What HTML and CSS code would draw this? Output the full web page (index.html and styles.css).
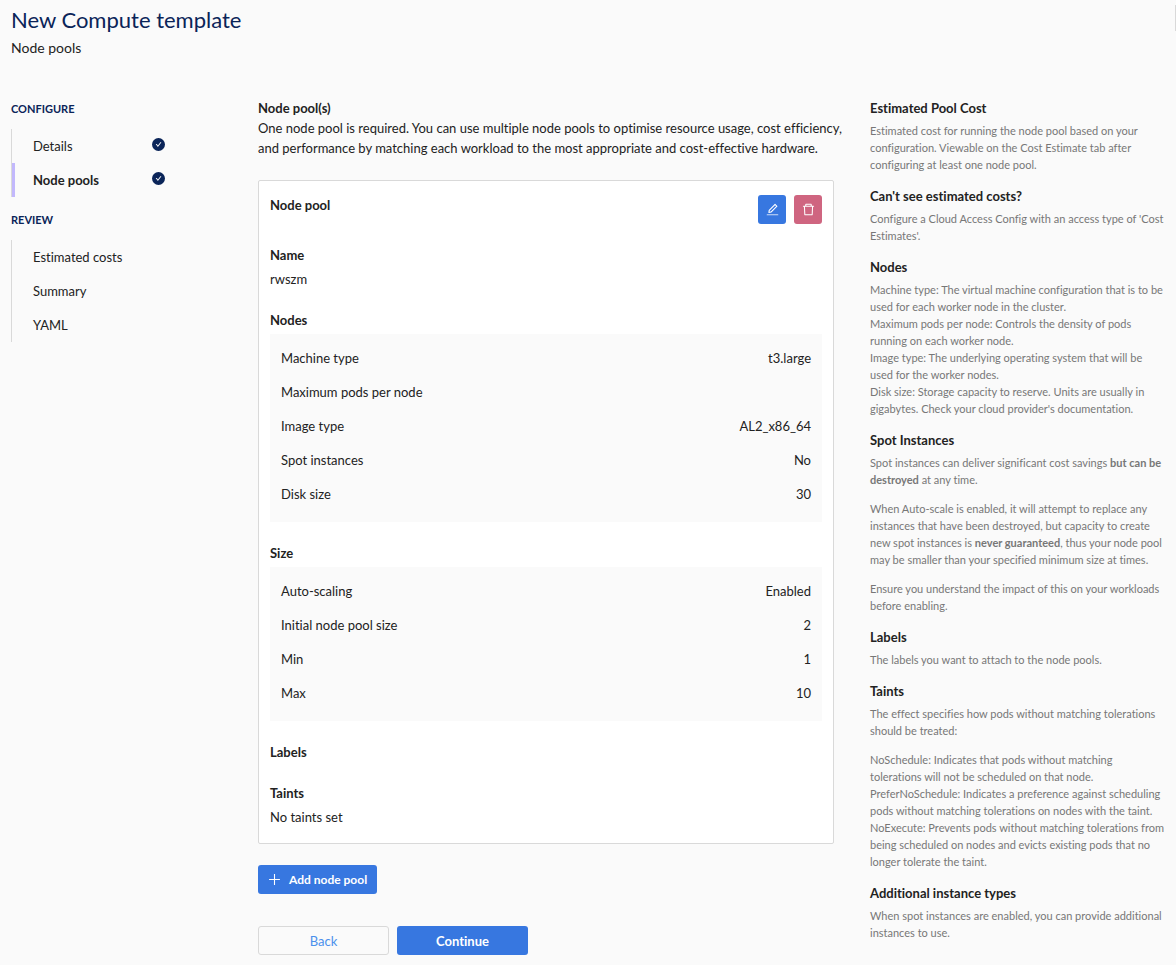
FILE: index.html
```html
<!DOCTYPE html>
<html lang="en">
<head>
<meta charset="utf-8">
<meta name="viewport" content="width=device-width, initial-scale=1">
<title>New Compute template</title>
<link rel="stylesheet" href="styles.css">
</head>
<body>
<header class="page-header">
  <div>
    <h1 class="page-title">New Compute template</h1>
    <p class="page-subtitle">Node pools</p>
  </div>
  <span class="header-edge"></span>
</header>
<div class="layout">
  <nav class="steps" aria-label="Steps">
    <h2 class="steps-heading">CONFIGURE</h2>
    <ul class="steps-list">
      <li><a class="step" href="#details">Details
        <svg class="step-check" viewBox="64 64 896 896" aria-hidden="true"><circle cx="512" cy="512" r="448" fill="#0a2458"/><path fill="#fff" d="M699 353h-46.9c-10.2 0-19.9 4.9-25.9 13.3L469 584.3l-71.2-98.8c-6-8.3-15.6-13.3-25.9-13.3H325c-6.5 0-10.3 7.4-6.5 12.7l124.6 172.8a31.8 31.8 0 0051.7 0l210.6-292c3.9-5.3.1-12.7-6.4-12.7z"/></svg></a></li>
      <li><a class="step step-active" href="#node-pools" aria-current="step">Node pools
        <svg class="step-check" viewBox="64 64 896 896" aria-hidden="true"><circle cx="512" cy="512" r="448" fill="#0a2458"/><path fill="#fff" d="M699 353h-46.9c-10.2 0-19.9 4.9-25.9 13.3L469 584.3l-71.2-98.8c-6-8.3-15.6-13.3-25.9-13.3H325c-6.5 0-10.3 7.4-6.5 12.7l124.6 172.8a31.8 31.8 0 0051.7 0l210.6-292c3.9-5.3.1-12.7-6.4-12.7z"/></svg></a></li>
    </ul>
    <h2 class="steps-heading">REVIEW</h2>
    <ul class="steps-list">
      <li><a class="step" href="#costs">Estimated costs</a></li>
      <li><a class="step" href="#summary">Summary</a></li>
      <li><a class="step" href="#yaml">YAML</a></li>
    </ul>
  </nav>

  <main class="content">
    <h2 class="label">Node pool(s)</h2>
    <p class="intro">One node pool is required. You can use multiple node pools to optimise resource usage, cost efficiency, and performance by matching each workload to the most appropriate and cost-effective hardware.</p>

    <section class="card">
      <div class="card-header">
        <h3 class="label">Node pool</h3>
        <div class="card-actions">
          <button class="btn btn-icon btn-primary" type="button" aria-label="Edit node pool"><svg class="icon" viewBox="64 64 896 896" aria-hidden="true"><path d="M257.7 752c2 0 4-.2 6-.5L431.9 722c2-.4 3.9-1.3 5.3-2.8l423.9-423.9a9.96 9.96 0 000-14.1L694.9 114.9c-1.900-1.900-4.400-2.900-7.100-2.900s-5.200 1-7.100 2.900L256.800 538.800c-1.500 1.500-2.400 3.300-2.800 5.300l-29.500 168.200a33.500 33.500 0 009.400 29.800c6.600 6.400 14.900 9.900 23.800 9.900zm67.400-174.400L687.800 215l73.300 73.300-362.700 362.600-88.900 15.700 15.600-89z"/><path opacity=".75" d="M880 836H144c-17.700 0-32 14.300-32 32v36c0 4.400 3.600 8 8 8h784c4.400 0 8-3.600 8-8v-36c0-17.700-14.300-32-32-32z"/></svg></button>
          <button class="btn btn-icon btn-danger" type="button" aria-label="Delete node pool"><svg class="icon" viewBox="64 64 896 896" aria-hidden="true"><path d="M360 184h-8c4.400 0 8-3.600 8-8v8h304v-8c0 4.400 3.600 8 8 8h-8v72h72v-80c0-35.300-28.700-64-64-64H352c-35.300 0-64 28.700-64 64v80h72v-72zm504 72H160c-17.700 0-32 14.300-32 32v32c0 4.400 3.600 8 8 8h60.400l24.700 523c1.600 34.100 29.800 61 63.900 61h454c34.200 0 62.300-26.800 63.900-61l24.700-523H888c4.400 0 8-3.600 8-8v-32c0-17.700-14.300-32-32-32zM731.300 840H292.700l-24.200-512h487l-24.200 512z"/></svg></button>
        </div>
      </div>
      <section class="group">
        <h4 class="label">Name</h4>
        <p class="value">rwszm</p>
      </section>
      <section class="group">
        <h4 class="label">Nodes</h4>
        <dl class="facts">
          <div class="fact"><dt>Machine type</dt><dd>t3.large</dd></div>
          <div class="fact"><dt>Maximum pods per node</dt><dd></dd></div>
          <div class="fact"><dt>Image type</dt><dd>AL2_x86_64</dd></div>
          <div class="fact"><dt>Spot instances</dt><dd>No</dd></div>
          <div class="fact"><dt>Disk size</dt><dd>30</dd></div>
        </dl>
      </section>
      <section class="group">
        <h4 class="label">Size</h4>
        <dl class="facts">
          <div class="fact"><dt>Auto-scaling</dt><dd>Enabled</dd></div>
          <div class="fact"><dt>Initial node pool size</dt><dd>2</dd></div>
          <div class="fact"><dt>Min</dt><dd>1</dd></div>
          <div class="fact"><dt>Max</dt><dd>10</dd></div>
        </dl>
      </section>
      <section class="group">
        <h4 class="label">Labels</h4>
      </section>
      <section class="group">
        <h4 class="label">Taints</h4>
        <p class="value">No taints set</p>
      </section>
    </section>

    <button class="btn btn-primary btn-add" type="button"><svg class="icon" viewBox="0 0 12 12" aria-hidden="true"><path d="M5.500 1h1v4.500H11v1H6.500V11h-1V6.500H1v-1h4.500z"/></svg>Add node pool</button>
    <div class="form-actions">
      <button class="btn btn-wide btn-default" type="button">Back</button>
      <button class="btn btn-wide btn-primary" type="button">Continue</button>
    </div>
  </main>

  <aside class="help">
    <h3>Estimated Pool Cost</h3>
    <p>Estimated cost for running the node pool based on your configuration. Viewable on the Cost Estimate tab after configuring at least one node pool.</p>
    <h3>Can't see estimated costs?</h3>
    <p>Configure a Cloud Access Config with an access type of 'Cost Estimates'.</p>
    <h3>Nodes</h3>
    <ul>
      <li>Machine type: The virtual machine configuration that is to be used for each worker node in the cluster.</li>
      <li>Maximum pods per node: Controls the density of pods running on each worker node.</li>
      <li>Image type: The underlying operating system that will be used for the worker nodes.</li>
      <li>Disk size: Storage capacity to reserve. Units are usually in gigabytes. Check your cloud provider's documentation.</li>
    </ul>
    <h3>Spot Instances</h3>
    <p>Spot instances can deliver significant cost savings <strong>but can be destroyed</strong> at any time.</p>
    <p>When Auto-scale is enabled, it will attempt to replace any instances that have been destroyed, but capacity to create new spot instances is <strong>never guaranteed</strong>, thus your node pool may be smaller than your specified minimum size at times.</p>
    <p>Ensure you understand the impact of this on your workloads before enabling.</p>
    <h3>Labels</h3>
    <p>The labels you want to attach to the node pools.</p>
    <h3>Taints</h3>
    <p>The effect specifies how pods without matching tolerations should be treated:</p>
    <ul>
      <li>NoSchedule: Indicates that pods without matching tolerations will not be scheduled on that node.</li>
      <li>PreferNoSchedule: Indicates a preference against scheduling pods without matching tolerations on nodes with the taint.</li>
      <li>NoExecute: Prevents pods without matching tolerations from being scheduled on nodes and evicts existing pods that no longer tolerate the taint.</li>
    </ul>
    <h3>Additional instance types</h3>
    <p>When spot instances are enabled, you can provide additional instances to use.</p>
  </aside>
</div>
</body>
</html>
```
FILE: styles.css
```css
* {
  box-sizing: border-box;
  margin: 0;
  padding: 0;
}

body {
  background: #fafafa;
  color: #222;
  font-family: Lato, "Liberation Sans", sans-serif;
  font-size: 13px;
  line-height: 20px;
  font-variant-ligatures: no-common-ligatures;
}

ul {
  list-style: none;
}

.page-header {
  display: flex;
  justify-content: space-between;
  padding: 5px 0 0 11px;
}

.page-title {
  color: #0a2458;
  font-size: 22px;
  font-weight: 400;
  line-height: 30px;
}

.page-subtitle {
  font-size: 14px;
  line-height: 26px;
}

.header-edge {
  width: 1px;
  height: 26px;
  background: #d9d9d9;
}

.layout {
  display: grid;
  grid-template-columns: 154px minmax(0, 1fr) 331px;
  padding: 37px 11px 10px 11px;
}

.steps-heading {
  color: #0a2458;
  font-size: 11px;
  font-weight: 700;
  line-height: 22px;
}

.steps-list {
  margin: 9px 0 12px;
  border-left: 1px solid #d9d9d9;
}

.step {
  display: flex;
  align-items: center;
  justify-content: space-between;
  height: 34px;
  padding-left: 21px;
  color: inherit;
  text-decoration: none;
}

.step-active {
  padding-left: 18px;
  border-left: 3px solid #c2b8fc;
  font-weight: 700;
}

.step-check {
  width: 13px;
  height: 13px;
  margin-bottom: 4px;
}

.content {
  padding-left: 93px;
}

.intro {
  margin-right: -16px;
}

.label {
  font-size: 13px;
  font-weight: 700;
}

.card {
  margin-top: 22px;
  padding: 14px 11px 16px;
  background: #fff;
  border: 1px solid #d9d9d9;
  border-radius: 2px;
}

.card-header,
.card-actions {
  display: flex;
  justify-content: space-between;
  gap: 8px;
}

.group {
  margin-top: 21px;
}

.value {
  margin-top: 4px;
}

.facts {
  margin-top: 4px;
  padding: 7px 11px 11px;
  background: #fafafa;
}

.fact {
  display: flex;
  justify-content: space-between;
  line-height: 34px;
}

.btn {
  display: inline-flex;
  align-items: center;
  justify-content: center;
  height: 29px;
  border: 1px solid transparent;
  border-radius: 3px;
  color: #fff;
  font: inherit;
  font-weight: 700;
  cursor: pointer;
}

.btn-primary {
  background: #3777e0;
}

.btn-danger {
  background: #cf6580;
}

.btn-default {
  background: #fafafa;
  border-color: #d9d9d9;
  color: #4a90ec;
  font-weight: 400;
}

.btn-icon {
  width: 28px;
}

.icon {
  width: 13px;
  height: 13px;
  fill: #fff;
}

.btn-add {
  gap: 8px;
  margin-top: 21px;
  padding: 0 9px;
  font-size: 12px;
}

.btn-wide {
  width: 131px;
}

.form-actions {
  display: flex;
  gap: 8px;
  margin-top: 32px;
}

.help {
  padding-left: 36px;
  color: #777;
  font-size: 11px;
  line-height: 17px;
}

.help h3 {
  margin-bottom: 4px;
  color: #222;
  font-size: 13px;
  line-height: 20px;
}

.help * + h3 {
  margin-top: 13px;
}

.help p + p,
.help p + ul {
  margin-top: 12px;
}
```
